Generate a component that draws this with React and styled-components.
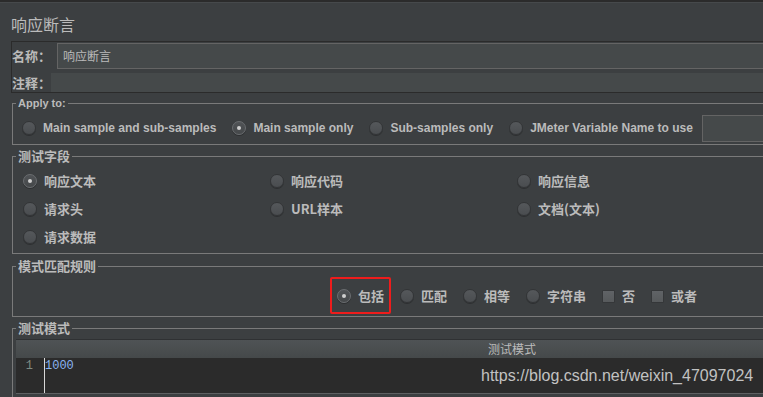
import React from 'react';
import styled, { createGlobalStyle } from 'styled-components';

const CJK = `"Noto Sans CJK SC", "Liberation Sans", sans-serif`;
const LATIN = `"Liberation Sans", "Noto Sans CJK SC", sans-serif`;
const MONO = `"Liberation Mono", "DejaVu Sans Mono", monospace`;

const Global = createGlobalStyle`
  html, body { margin: 0; padding: 0; background: #3c3f41; overflow: hidden; }
  * { box-sizing: border-box; }
`;

const Page = styled.div`
  position: relative;
  width: 763px;
  height: 397px;
  overflow: hidden;
  background: #3c3f41;
  color: #bbbbbb;
  font-family: ${LATIN};
`;

const TopStrip = styled.div`
  height: 3px;
  background: #2b2b2b;
  border-bottom: 1px solid #46494b;
`;

const Title = styled.h1`
  margin: 11px 0 0 11px;
  font: 400 16px/20px ${CJK};
  color: #bbbbbb;
`;

const NamePanel = styled.div`
  margin: 7px -260px 0 11px;
  border: 1px solid #2b2b2b;
  border-right: none;
  display: flex;
  flex-direction: column;
  gap: 4px;
`;

const FieldRow = styled.div`
  display: flex;
  align-items: center;
  height: ${(p) => p.$h}px;
  padding-top: ${(p) => p.$pt || 0}px;
`;

const FieldLabel = styled.span`
  flex: none;
  width: 39px;
  margin-right: ${(p) => p.$gap}px;
  font: 700 13px/16px ${CJK};
  color: #bbbbbb;
`;

const TextInput = styled.div`
  flex: 1;
  height: ${(p) => p.$h}px;
  background: #45494a;
  border: ${(p) => (p.$bordered ? '1px solid #646464' : 'none')};
  padding-left: 5px;
  display: flex;
  align-items: center;
  font: 400 12px/16px ${CJK};
  color: #bbbbbb;
`;

const Group = styled.fieldset`
  margin: ${(p) => p.$mt}px -249px 0 12px;
  padding: ${(p) => p.$pad};
  border: 1px solid #7a7a7a;
  min-width: 0;
`;

const Legend = styled.legend`
  margin-left: 3px;
  padding: 0 2px;
  font: 700 ${(p) => (p.$latin ? `11px/14px ${LATIN}` : `13px/14px ${CJK}`)};
  color: #bbbbbb;
`;

const FlowRow = styled.div`
  display: flex;
  align-items: center;
  gap: 16px;
  height: ${(p) => p.$h}px;
  padding-left: ${(p) => p.$pl}px;
`;

const OptionGrid = styled.div`
  display: grid;
  grid-template-columns: repeat(3, 247px);
  grid-auto-rows: 28px;
  align-items: center;
  padding-left: 10px;
`;

const Item = styled.label`
  position: relative;
  display: inline-flex;
  align-items: center;
  gap: 7px;
  height: 20px;
  flex: none;
  ${(p) =>
    p.$marked &&
    `
    &::after {
      content: '';
      position: absolute;
      top: -9px; bottom: -8px; left: -7px; right: -7px;
      border: 2px solid #ee1c1c;
      border-radius: 2px;
    }
  `}
`;

const RadioDot = styled.span`
  flex: none;
  width: 14px;
  height: 14px;
  border-radius: 50%;
  border: 1px solid ${(p) => (p.$on ? '#6a6d70' : '#333537')};
  background: ${(p) =>
    p.$on
      ? 'linear-gradient(#505356, #45484a)'
      : 'linear-gradient(#55585b, #4a4d50)'};
  box-shadow: 0 1px 0 rgba(0, 0, 0, 0.25);
  display: inline-flex;
  align-items: center;
  justify-content: center;
  &::after {
    content: '';
    display: ${(p) => (p.$on ? 'block' : 'none')};
    width: 4px;
    height: 4px;
    border-radius: 50%;
    background: #cfcfcf;
  }
`;

const CheckBox = styled.span`
  flex: none;
  width: 13px;
  height: 13px;
  border: 1px solid #353739;
  background: linear-gradient(#606366, #575a5c);
  border-radius: 1px;
`;

const OptText = styled.span`
  font: 700 ${(p) => (p.$latin ? `12px/16px ${LATIN}` : `13px/16px ${CJK}`)};
  color: #bbbbbb;
  white-space: nowrap;
`;

const VarInput = styled.div`
  flex: none;
  width: 150px;
  height: 27px;
  margin-left: -7px;
  background: #45494a;
  border: 1px solid #646464;
`;

const TablePane = styled.div`
  margin: 0 3px;
`;

const TableHeader = styled.div`
  height: 19px;
  border-top: 1px solid #2f3133;
  background: linear-gradient(#4f5355, #45494a);
  text-align: center;
  font: 400 12px/17px ${CJK};
  color: #bbbbbb;
`;

const Editor = styled.div`
  display: flex;
  height: 36px;
  background: #2b2b2b;
  border-bottom: 1px solid #5e6062;
`;

const Gutter = styled.div`
  width: 29px;
  border-right: 1px solid #d8d8d8;
  padding-right: 11px;
  text-align: right;
  font: 400 12px/17px ${MONO};
  color: #7f8b83;
`;

const Code = styled.div`
  font: 400 12px/17px ${MONO};
  color: #8ab4f0;
`;

const Watermark = styled.div`
  position: absolute;
  left: 481px;
  top: 366px;
  font: 400 16px/20px ${LATIN};
  color: #c2c2c2;
  white-space: nowrap;
`;

const Radio = ({ on, latin, children, marked }) => (
  <Item $marked={marked}>
    <RadioDot $on={on} />
    <OptText $latin={latin}>{children}</OptText>
  </Item>
);

const Check = ({ children }) => (
  <Item>
    <CheckBox />
    <OptText>{children}</OptText>
  </Item>
);

export default function App() {
  return (
    <Page>
      <Global />
      <TopStrip />
      <Title>响应断言</Title>
      <NamePanel>
        <FieldRow $h={27} $pt={1}>
          <FieldLabel $gap={6}>名称：</FieldLabel>
          <TextInput $h={26} $bordered>响应断言</TextInput>
        </FieldRow>
        <FieldRow $h={19}>
          <FieldLabel $gap={0}>注释：</FieldLabel>
          <TextInput $h={19} />
        </FieldRow>
      </NamePanel>

      <Group $mt={3} $pad="7px 0 5px 0">
        <Legend $latin>Apply to:</Legend>
        <FlowRow $h={22} $pl={9}>
          <Radio latin>Main sample and sub-samples</Radio>
          <Radio latin on>Main sample only</Radio>
          <Radio latin>Sub-samples only</Radio>
          <Radio latin>JMeter Variable Name to use</Radio>
          <VarInput />
        </FlowRow>
      </Group>

      <Group $mt={4} $pad="4px 0 2px 0">
        <Legend>测试字段</Legend>
        <OptionGrid>
          <Radio on>响应文本</Radio>
          <Radio>响应代码</Radio>
          <Radio>响应信息</Radio>
          <Radio>请求头</Radio>
          <Radio>URL样本</Radio>
          <Radio>文档(文本)</Radio>
          <Radio>请求数据</Radio>
        </OptionGrid>
      </Group>

      <Group $mt={5} $pad="10px 0 7px 0">
        <Legend>模式匹配规则</Legend>
        <FlowRow $h={26} $pl={324}>
          <Radio on marked>包括</Radio>
          <Radio>匹配</Radio>
          <Radio>相等</Radio>
          <Radio>字符串</Radio>
          <Check>否</Check>
          <Check>或者</Check>
        </FlowRow>
      </Group>

      <Group $mt={4} $pad="4px 0 20px 0">
        <Legend>测试模式</Legend>
        <TablePane>
          <TableHeader>测试模式</TableHeader>
          <Editor>
            <Gutter>1</Gutter>
            <Code>1000</Code>
          </Editor>
        </TablePane>
      </Group>

      <Watermark>https://blog.csdn.net/weixin_47097024</Watermark>
    </Page>
  );
}
